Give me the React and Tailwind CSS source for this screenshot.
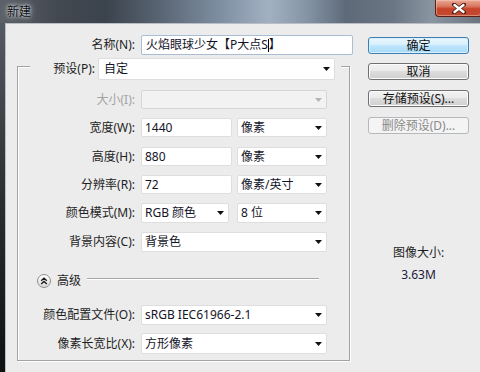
import React from "react";

const Tri = ({ c = "#111" }) => (
  <svg width="7" height="4" viewBox="0 0 7 4" className="shrink-0">
    <polygon points="0,0 7,0 3.5,4" fill={c} />
  </svg>
);

const Input = ({ w, h = "h-[19px]", children }) => (
  <div className={`${w} ${h} flex items-center bg-white border border-[#dedede] rounded-[2px] pl-[3px] text-[12px] leading-[14px] text-[#141428]`}>
    {children}
  </div>
);

const Select = ({ w, h = "h-[19px]", children, disabled }) => (
  <div
    className={`${w} ${h} flex items-center justify-between border rounded-[2px] pl-[3px] pr-[4px] text-[12px] leading-[14px] text-[#141428] ${
      disabled ? "bg-[#f2f2f2] border-[#d6d6d6]" : "bg-white border-[#dedede]"
    }`}
  >
    <span>{children}</span>
    <Tri c={disabled ? "#b4b4b4" : "#111"} />
  </div>
);

const Label = ({ w = "w-[118px]", children, disabled }) => (
  <div className={`${w} shrink-0 text-right pr-[1px] text-[12px] leading-[14px] ${disabled ? "text-[#a3a3a3]" : "text-[#1e1e1e]"}`}>
    {children}
  </div>
);

const Btn = ({ children, kind = "normal", mt }) => {
  const cls =
    kind === "default"
      ? "border-[#3c7fb1] bg-[linear-gradient(to_bottom,#eaf6fd_0%,#d9f0fc_45%,#bee6fd_50%,#a7d9f5_100%)] shadow-[inset_0_0_0_1px_#d8f0fb] text-[#111]"
      : kind === "disabled"
      ? "border-[#b5b9bc] bg-[#f4f4f4] text-[#8a8a8a]"
      : "border-[#707070] bg-[linear-gradient(to_bottom,#f2f2f2_0%,#ebebeb_45%,#dddddd_50%,#cfcfcf_100%)] shadow-[inset_0_0_0_1px_#fbfbfb] text-[#111]";
  return (
    <div className={`${mt} w-[101px] h-[17px] border rounded-[3px] flex items-center justify-center text-[12px] leading-[14px] ${cls}`}>
      {children}
    </div>
  );
};

export default function App() {
  return (
    <div className="w-[480px] h-[372px] overflow-hidden flex flex-col font-['Noto_Sans','Noto_Sans_CJK_SC',sans-serif] bg-[#1a1c1f]">
      {/* title bar */}
      <div className="h-[23px] shrink-0 flex items-start bg-[linear-gradient(to_right,#5c6168_0%,#434951_12%,#3b434d_22%,#5b6775_34%,#7f8fa2_46%,#a2b1c2_56%,#8494a6_64%,#5e6a78_72%,#6a7683_82%,#8a95a2_90%,#6c747e_100%)]">
        <div className="ml-[7px] mt-[5px] text-[12px] leading-[14px] text-[#111] [text-shadow:0_0_6px_#dfe6ee,0_0_3px_#dfe6ee]">
          新建
        </div>
        <div className="ml-auto mr-[-2px] w-[47px] h-[17px] rounded-b-[4px] border border-t-0 border-[#5b1f14] bg-[linear-gradient(to_bottom,#e9a995_0%,#d9765e_40%,#c7432a_55%,#c24b31_100%)] shadow-[inset_0_0_0_1px_rgba(255,210,200,0.45)] flex items-center justify-center">
          <svg width="14" height="11" viewBox="0 0 14 11">
            <path d="M2 1.5 L12 9.5 M12 1.5 L2 9.5" stroke="#4a1a10" strokeWidth="4" strokeLinecap="round" />
            <path d="M2.5 2 L11.5 9 M11.5 2 L2.5 9" stroke="#ffffff" strokeWidth="2.4" strokeLinecap="round" />
          </svg>
        </div>
      </div>

      <div className="flex flex-1">
        {/* left frame */}
        <div className="w-[5px] shrink-0 bg-[linear-gradient(to_bottom,#555b62_0%,#2b2e32_50%,#0f1011_100%)]" />
        {/* client */}
        <div className="flex-1 flex bg-[#ececec] border-l border-t border-[#b9bec4]">
          {/* left column */}
          <div className="w-[349px] shrink-0 flex flex-col">
            {/* name row */}
            <div className="mt-[11px] flex items-center">
              <Label w="w-[130px]">名称(N):</Label>
              <div className="ml-[5px] w-[212px] h-[20px] flex items-center bg-white border border-[#a9bdd3] rounded-[2px] pl-[4px] text-[12px] leading-[14px] text-[#141428]">
                火焰眼球少女【P大点S
                <span className="inline-block w-[1px] h-[13px] bg-black" />】
              </div>
            </div>

            {/* group box */}
            <div className="ml-[11px] mt-[11px] w-[333px] h-[295px] border border-[#a3a3a3] shadow-[1px_1px_0_#ffffff,inset_1px_1px_0_#ffffff] flex flex-col">
              {/* preset legend row */}
              <div className="-mt-[9px] ml-[12px] self-start flex items-center bg-[#ececec] pr-[6px]">
                <Label w="w-[66px]">预设(P):</Label>
                <div className="ml-[2px]">
                  <Select w="w-[237px]" h="h-[22px]">
                    <span className="pl-[2px]">自定</span>
                  </Select>
                </div>
              </div>

              <div className="mt-[10px] flex items-center">
                <Label disabled>大小(I):</Label>
                <div className="ml-[5px]">
                  <Select w="w-[186px]" disabled />
                </div>
              </div>

              <div className="mt-[9px] flex items-center">
                <Label>宽度(W):</Label>
                <div className="ml-[5px] flex gap-[5px]">
                  <Input w="w-[91px]">1440</Input>
                  <Select w="w-[90px]">像素</Select>
                </div>
              </div>

              <div className="mt-[10px] flex items-center">
                <Label>高度(H):</Label>
                <div className="ml-[5px] flex gap-[5px]">
                  <Input w="w-[91px]">880</Input>
                  <Select w="w-[90px]">像素</Select>
                </div>
              </div>

              <div className="mt-[9px] flex items-center">
                <Label>分辨率(R):</Label>
                <div className="ml-[5px] flex gap-[5px]">
                  <Input w="w-[91px]">72</Input>
                  <Select w="w-[90px]">像素/英寸</Select>
                </div>
              </div>

              <div className="mt-[9px] flex items-center">
                <Label>颜色模式(M):</Label>
                <div className="ml-[5px] flex gap-[8px]">
                  <Select w="w-[88px]" h="h-[20px]">RGB 颜色</Select>
                  <Select w="w-[90px]" h="h-[20px]">8 位</Select>
                </div>
              </div>

              <div className="mt-[9px] flex items-center">
                <Label>背景内容(C):</Label>
                <div className="ml-[5px]">
                  <Select w="w-[186px]" h="h-[20px]">背景色</Select>
                </div>
              </div>

              {/* advanced */}
              <div className="mt-[21px] h-[15px] flex items-center">
                <div className="ml-[19px] w-[14px] h-[14px] rounded-full border border-[#8e8e8e] bg-[linear-gradient(to_bottom,#ffffff,#dadada)] flex items-center justify-center">
                  <svg width="8" height="8" viewBox="0 0 8 8">
                    <path d="M1.2 3.8 L4 1.2 L6.8 3.8 M1.2 7 L4 4.4 L6.8 7" stroke="#1a1a1a" strokeWidth="1.3" fill="none" />
                  </svg>
                </div>
                <div className="ml-[6px] text-[12px] leading-[14px] text-[#1e1e1e]">高级</div>
                <div className="ml-[6px] w-[232px] h-[2px] -mt-[3px] border-t border-[#a8a8a8] border-b border-b-white" />
              </div>

              <div className="mt-[17px] flex items-center">
                <Label>颜色配置文件(O):</Label>
                <div className="ml-[5px]">
                  <Select w="w-[186px]" h="h-[20px]">sRGB IEC61966-2.1</Select>
                </div>
              </div>

              <div className="mt-[8px] flex items-center">
                <Label>像素长宽比(X):</Label>
                <div className="ml-[5px]">
                  <Select w="w-[186px]" h="h-[21px]">方形像素</Select>
                </div>
              </div>
            </div>
          </div>

          {/* right column */}
          <div className="ml-[13px] w-[101px] flex flex-col">
            <Btn kind="default" mt="mt-[13px]">确定</Btn>
            <Btn mt="mt-[9px]">取消</Btn>
            <Btn mt="mt-[10px]">存储预设(S)...</Btn>
            <Btn kind="disabled" mt="mt-[10px]">删除预设(D)...</Btn>
            <div className="mt-[112px] text-center text-[12px] leading-[14px] text-[#1e1e1e]">图像大小:</div>
            <div className="mt-[8px] text-center text-[12px] leading-[14px] text-[#1c2040]">3.63M</div>
          </div>
        </div>
      </div>
    </div>
  );
}
